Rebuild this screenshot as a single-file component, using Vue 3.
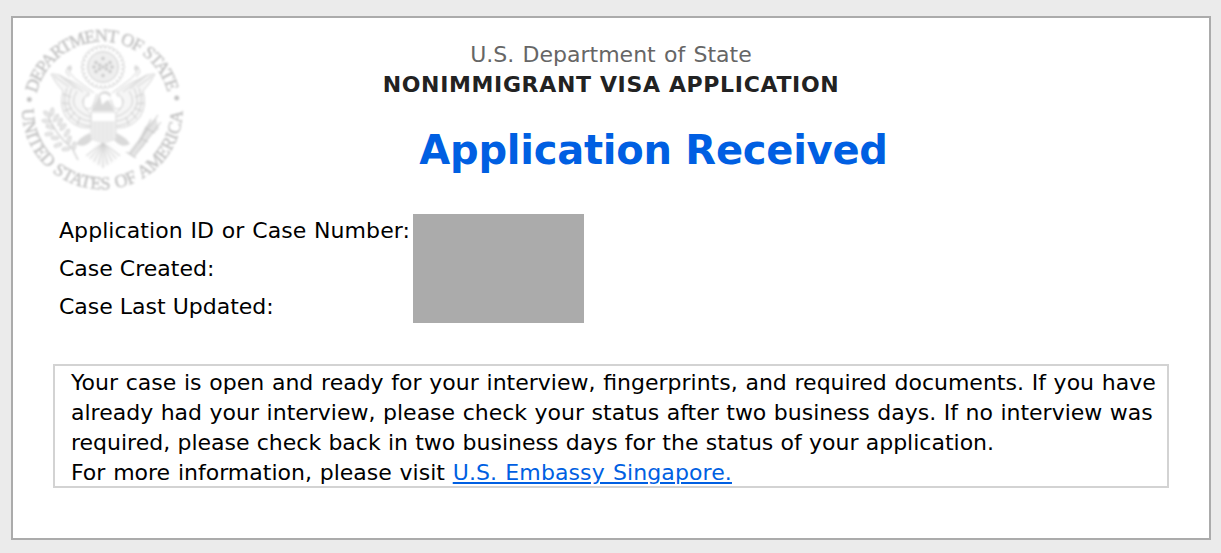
<script setup>
const fields = [
  { label: 'Application ID or Case Number:', cls: 'f1' },
  { label: 'Case Created:', cls: 'f2' },
  { label: 'Case Last Updated:', cls: 'f3' },
]
const petals = Array.from({ length: 28 }, (_, i) => {
  const a = (i / 28) * Math.PI * 2
  return { x: 103 + 19.6 * Math.cos(a), y: 67 + 19.6 * Math.sin(a) }
})
const stars = [
  [103, 58.5], [96, 62.5], [110, 62.5], [103, 67], [96, 71.5], [110, 71.5], [103, 75.5],
  [99.5, 65], [106.5, 65], [99.5, 69], [106.5, 69], [94, 67], [112, 67],
]
const leaves = [
  [47, 114, 40], [52, 112, 100], [46, 121, 10], [56, 118, 120], [50, 127, 20], [60, 122, 110],
  [49, 134, -10], [63, 127, 130], [55, 138, 0], [67, 133, 120], [58, 145, -20], [69, 140, 110],
  [66, 149, -10], [74, 146, 100],
]
const tail = [-17, -13, -9, -4.5, 0, 4.5, 9, 13, 17]
</script>

<template>
  <main class="page">
    <section class="card">
      <header class="head">
        <svg class="seal" width="170" height="174" viewBox="18 22 170 174" aria-hidden="true">
          <defs>
            <path id="arc-top" d="M36.7 93.6A67.5 67.5 0 0 1 167.8 92.4" />
            <path id="arc-bottom" d="M22 109A80.3 80.3 0 0 0 182.6 109" />
          </defs>
          <g class="ring">
            <text textLength="179" lengthAdjust="spacing"><textPath href="#arc-top" textLength="179">DEPARTMENT OF STATE</textPath></text>
            <text textLength="250" lengthAdjust="spacing"><textPath href="#arc-bottom" textLength="250">UNITED STATES OF AMERICA</textPath></text>
            <circle cx="29.3" cy="99.5" r="2.3" />
            <circle cx="176.7" cy="98" r="2.3" />
          </g>
          <g class="emblem">
            <circle v-for="(p, i) in petals" :key="'p' + i" :cx="p.x" :cy="p.y" r="2" class="line" />
            <circle cx="103" cy="67" r="18.6" class="white" />
            <circle cx="103" cy="67" r="15.5" class="disc" />
            <circle v-for="(s, i) in stars" :key="'s' + i" :cx="s[0]" :cy="s[1]" r="1.7" class="star" />
            <g v-for="side in ['', 'translate(206 0) scale(-1 1)']" :key="side" :transform="side">
              <path class="wing" d="M51 74Q60 74 66 79Q78 83 91 94L83 99Q82 108 91 114V128Q75 129 66 117Q59 106 63 91Q56 84 51 74Z" />
              <path class="line" d="M54 76L69 87M59 75L76 89M65 78L83 92M67 88Q60 107 73 119Q81 126 91 126M72 88Q64 104 75 114Q82 121 91 121M77 91Q69 103 79 111Q85 116 91 117M63 94L71 97M62 103L70 104M64 111L72 108M69 119L75 112M77 125L80 117" />
              <path class="line" d="M70 77Q63 71 69 67Q73 68 69 72Q74 79 82 84L94 93" />
              <path class="dark" d="M67 67L71 65L72 69L69 71Z" />
              <path class="dark" d="M90 133Q80 137 76 144Q84 149 92 140Z" />
              <path class="white" d="M89 93Q81 98 84 107Q91 113 94 103L97 94Z" />
              <path class="line" d="M89 93Q81 98 84 107Q91 113 94 103L97 94M90 94L87 97" />
            </g>
            <path class="dark" d="M99 94Q105 88 111 94L109 101L115 111H91L96 102Z" />
            <path class="white" d="M100 96Q103 92 108 95L112 99L106 101L102 105Z" />
            <path class="shield" d="M91 112H116V139Q110 141 103.5 143Q97 141 91 139Z" />
            <rect class="white" x="92" y="113" width="23" height="8" />
            <path class="stripes" d="M95 122V139M99 122V140M103 122V141M107 122V140M111 122V139" />
            <path class="light" d="M97 143L86 156L91 160L95 164L103 168L111 164L116 160L121 155L109 143Z" />
            <path v-for="t in tail" :key="t" class="line" :d="`M103 143L${103 + t} ${168 - Math.abs(t) * 0.72}`" />
            <path class="branch" d="M47 113Q55 135 72 148L78 160" />
            <ellipse v-for="(l, i) in leaves" :key="'l' + i" class="leaf" rx="4" ry="1.7" :transform="`translate(${l[0]} ${l[1]}) rotate(${l[2]})`" />
            <path class="arrow" d="M156 118L145 127L139 139L128 153L133 157L144 146L150 136L159 129Z" />
            <path class="shaft" d="M158 115L130 154M161 122L134 157M151 119L139 143M126 152L136 158M145 128L155 133M140 138L148 142" />
          </g>
        </svg>
        <div class="titles">
          <p class="dept"><span>U.S. Department of State</span></p>
          <h1 class="form"><span>NONIMMIGRANT VISA APPLICATION</span></h1>
          <h2 class="status"><span>Application Received</span></h2>
        </div>
      </header>

      <div class="details">
        <dl class="fields">
          <dt v-for="f in fields" :key="f.label"><span :class="f.cls">{{ f.label }}</span></dt>
        </dl>
        <div class="redacted"></div>
      </div>

      <div class="notice">
        <p class="n1">Your case is open and ready for your interview, fingerprints, and required documents. If you have</p>
        <p class="n2">already had your interview, please check your status after two business days. If no interview was</p>
        <p class="n3">required, please check back in two business days for the status of your application.</p>
        <p class="n4">For more information, please visit <a>U.S. Embassy Singapore.</a></p>
      </div>
    </section>
  </main>
</template>

<style>
body {
  margin: 0;
  background: #ebebeb;
}
</style>

<style scoped>
.page {
  box-sizing: border-box;
  height: 553px;
  padding: 16px 10px 13px 11px;
  background: #ebebeb;
  font-family: Verdana, "DejaVu Sans", sans-serif;
  font-size: 22px;
  line-height: 30px;
  color: #000;
  overflow: hidden;
}
.card {
  box-sizing: border-box;
  height: 524px;
  border: 2px solid #ababab;
  background: #fff;
}
.head {
  display: grid;
  grid-template-columns: 175px 1fr 175px;
  height: 196px;
}
.seal {
  margin: 4px 0 0 5px;
}
.ring {
  font: 18px "Liberation Serif", serif;
  word-spacing: 1px;
  fill: #c2c2c2;
  stroke: #c2c2c2;
  stroke-width: 0.4;
  filter: blur(0.8px);
}
.emblem {
  fill: none;
  stroke-width: 1;
  filter: blur(0.82px);
}
.light { fill: #fafafa; }
.line { stroke: #cecece; }
.disc { fill: #efefef; stroke: #cecece; }
.star { fill: #c8c8c8; }
.wing { fill: #f6f6f6; stroke: #d4d4d4; }
.dark { fill: #dadada; }
.white { fill: #fff; }
.shield { fill: #ededed; stroke: #e0e0e0; }
.stripes { stroke: #e2e2e2; }
.branch { stroke: #cecece; stroke-width: 1.3; }
.shaft { stroke: #c4c4c4; stroke-width: 1; }
.leaf { fill: #eaeaea; stroke: #d2d2d2; }
.arrow { fill: #e4e4e4; }
.titles {
  padding-top: 22px;
  text-align: center;
  white-space: nowrap;
}
p, h1, h2, dl {
  margin: 0;
}
.dept {
  color: #666;
  word-spacing: 1.3px;
}
.form {
  font-size: 22px;
  color: #222;
  letter-spacing: 0.65px;
  word-spacing: 0;
}
.status {
  margin-top: 26px;
  padding-left: 85px;
  font-size: 40px;
  line-height: 48px;
  letter-spacing: -0.25px;
  color: #005fe2;
}
.details {
  display: flex;
  height: 109px;
  padding-left: 46px;
}
.fields {
  width: 354px;
  white-space: nowrap;
}
.fields dt {
  height: 38px;
  line-height: 34px;
}
.f1 { letter-spacing: 0.07px; word-spacing: 0.7px; }
.redacted {
  width: 171px;
  background: #ababab;
}
.notice {
  box-sizing: border-box;
  width: 1116px;
  height: 124px;
  margin: 41px 0 0 40px;
  padding: 2px 0 0 16px;
  border: 2px solid #d3d3d3;
  white-space: nowrap;
}
.n1 { word-spacing: 0.74px; }
.n2 { word-spacing: 0.53px; }
.n3 { word-spacing: 0.25px; }
.n4 { word-spacing: 0.8px; }
.notice a {
  color: #005fe2;
  letter-spacing: 0.1px;
  word-spacing: 1.1px;
  text-decoration: underline;
  text-decoration-thickness: 2px;
  text-underline-offset: 2px;
}
</style>
